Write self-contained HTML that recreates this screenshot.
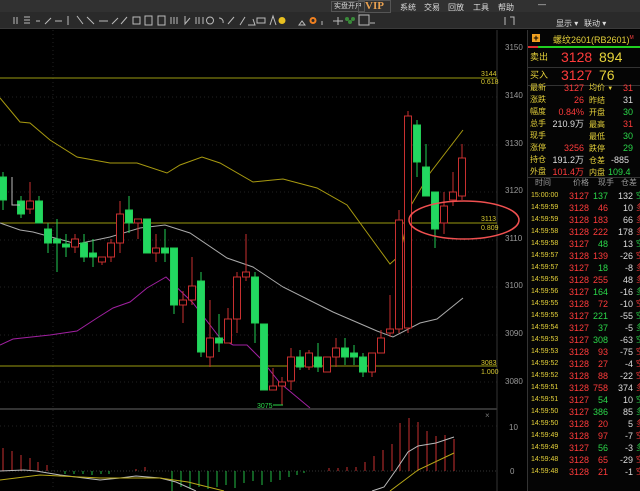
<!DOCTYPE html>
<html><head><meta charset="utf-8"><style>
*{margin:0;padding:0;box-sizing:border-box}
body{width:640px;height:491px;background:#000;overflow:hidden;position:relative;font-family:"Liberation Sans","Noto Sans CJK SC",sans-serif;color:#ccc}
.t1{position:absolute;left:0;top:0;width:640px;height:12px;background:#313131}
.t2{position:absolute;left:0;top:12px;width:640px;height:17px;background:#2a2a2a;border-bottom:1px solid #3a3a3a}
.tx{position:absolute;font-size:8px;color:#ddd;white-space:nowrap}
.rp{position:absolute;left:527px;top:30px;width:113px;height:461px;background:#050505;border-left:1px solid #333;overflow:hidden}
.a{position:absolute;white-space:nowrap;font-size:9px;line-height:10px}
.L{line-height:12px!important}
.y{color:#e6d23a}.r{color:#ff3b3b}.g{color:#2bd74a}.w{color:#ddd}
</style></head><body>
<div class="t1"></div><div class="t2"></div>
<div class="tx" style="left:331px;top:1px;border:1px solid #555;padding:0 2px;font-size:7px;line-height:9px">实盘开户</div>
<div class="tx" style="left:358px;top:0;border:1px solid #555;padding:0 6px;font:bold 11px 'Liberation Serif',serif;color:#e8a050;line-height:11px">VIP</div>
<div class="tx" style="left:400px;top:2px">系统</div>
<div class="tx" style="left:424px;top:2px">交易</div>
<div class="tx" style="left:448px;top:2px">回放</div>
<div class="tx" style="left:473px;top:2px">工具</div>
<div class="tx" style="left:498px;top:2px">帮助</div>
<div class="tx" style="left:538px;top:0">—</div>
<div class="tx" style="left:556px;top:18px">显示 ▾</div>
<div class="tx" style="left:584px;top:18px">联动 ▾</div>
<svg style="position:absolute;left:0;top:12px" width="520" height="17" stroke="#bbb" fill="none" stroke-width="1">
<path d="M14 5v7M17 5v7M24 5h6M24 8h6M24 11h6M36 9h4M45 12l6-6M55 9h7M68 4v9M77 4l6 8M87 5l7 7M99 9h9M112 12l6-6M121 12l6-7M133 5h7v7h-7zM145 4h7v9h-7zM158 4h7v9h-7zM171 5v7M174 5v7M177 5v7M185 4v8l5-6M196 5v7M199 5v7M203 5v7"/>
<circle cx="210" cy="8.5" r="3.5"/>
<path d="M219 6a4 4 0 0 1 4 5M228 12l6-7M240 13l5-8M248 13h7l-2-6M257 6h8v5h-8zM270 13l3-9 3 9M302 9l-3 4h6zM322 9v4M338 5v8M333 9h10"/>
<circle cx="282" cy="8.5" r="3.5" fill="#e8c020" stroke="none"/><circle cx="313" cy="8.5" r="2.5" stroke="#f08020" stroke-width="2"/>
<circle cx="350" cy="10" r="2" fill="#3a8a3a" stroke="none"/><circle cx="347" cy="7" r="2" fill="#3a8a3a" stroke="none"/><circle cx="353" cy="7" r="2" fill="#3a8a3a" stroke="none"/>
<rect x="359" y="3" width="10" height="10"/><path d="M370 11h5"/>
<path d="M505 5v8M510 5h4v8"/></svg>

<svg style="position:absolute;left:0;top:0" width="527" height="491" font-family="Liberation Sans" font-size="8">
<g stroke="#222" stroke-dasharray="1 3"><path d="M0 97h497M0 145h497M0 192h497M0 240h497M0 287h497M0 335h497M0 382h497M53 30v460M0 426h497"/></g>
<line x1="497" y1="30" x2="497" y2="491" stroke="#333"/>
<line x1="0" y1="409" x2="497" y2="409" stroke="#333" stroke-width="2"/>
<g fill="#999"><text x="505" y="50">3150</text><text x="505" y="98">3140</text><text x="505" y="146">3130</text><text x="505" y="193">3120</text><text x="505" y="241">3110</text><text x="505" y="288">3100</text><text x="505" y="336">3090</text><text x="505" y="384">3080</text><text x="509" y="430">10</text><text x="510" y="474">0</text></g>
<g stroke="#9a9a10"><path d="M0 78h497M0 223h497M0 366h497"/></g>
<g fill="#d6c830" font-size="7"><text x="481" y="76">3144</text><text x="481" y="84">0.618</text><text x="481" y="221">3113</text><text x="481" y="230">0.809</text><text x="481" y="365">3083</text><text x="481" y="374">1.000</text></g>
<path d="M0 98L20 122 30 123 50 140 77 157 110 163 137 163 167 173 180 165 202 157 220 163 253 182 283 179 317 188 347 205 363 227 390 264 400 255 410 207 430 173 463 130" stroke="#a89a10" fill="none"/>
<path d="M0 223L20 230 33 232 77 244 110 237 140 228 165 225 190 233 227 258 253 267 283 287 333 312 377 331 393 337 420 323 437 319 463 298" stroke="#aaa" fill="none"/>
<path d="M0 345L13 339 50 335 77 331 97 318 113 308 130 302 147 288 166 277 193 303 220 338 233 345 247 345 260 358 280 383 310 408" stroke="#a020a0" fill="none"/>
<g stroke-width="1">
<g stroke="#22cc55" fill="#22d760">
<path d="M3 172v38M21 196v22M39 196v27M48 223v30M57 219v53M66 234v23M84 234v28M93 239v28M129 196v37M147 219v33M165 229v33M174 248v66M201 272v85M219 314v38M255 272v71M264 324v66M300 350v20M318 343v29M345 338v27M354 345v20M363 353v24M417 120v57M426 144v52M435 192v56"/>
<rect x="-0.5" y="177" width="7" height="23"/><rect x="17.5" y="201" width="7" height="13"/><rect x="35.5" y="201" width="7" height="22"/><rect x="44.5" y="229" width="7" height="14"/><rect x="53.5" y="239" width="7" height="4"/><rect x="62.5" y="244" width="7" height="3"/><rect x="80.5" y="243" width="7" height="14"/><rect x="89.5" y="253" width="7" height="4"/><rect x="125.5" y="210" width="7" height="13"/><rect x="143.5" y="219" width="7" height="34"/><rect x="161.5" y="248" width="7" height="5"/><rect x="170.5" y="248" width="7" height="57"/><rect x="197.5" y="281" width="7" height="71"/><rect x="215.5" y="338" width="7" height="5"/><rect x="251.5" y="277" width="7" height="46"/><rect x="260.5" y="324" width="7" height="66"/><rect x="296.5" y="357" width="7" height="10"/><rect x="314.5" y="357" width="7" height="10"/><rect x="341.5" y="348" width="7" height="9"/><rect x="350.5" y="353" width="7" height="4"/><rect x="359.5" y="357" width="7" height="15"/><rect x="413.5" y="125" width="7" height="37"/><rect x="422.5" y="167" width="7" height="29"/><rect x="431.5" y="192" width="7" height="37"/>
</g>
<g stroke="#c83030" fill="none">
<path d="M30 182v32M75 234v19M102 257v8M111 239v23M120 201v52M138 219v20M156 234v28M183 291v32M192 257v48M210 300v67M228 308v35M237 272v61M246 234v47M273 368v22M282 377v28M291 348v42M309 350v20M327 357v15M336 338v29M372 353v24M381 330v23M390 295v42M399 210v123M408 111v222M444 192v42M453 172v34M462 144v56"/>
<g fill="#000"><rect x="26.5" y="201" width="7" height="8"/><rect x="71.5" y="239" width="7" height="8"/><rect x="98.5" y="257" width="7" height="5"/><rect x="107.5" y="243" width="7" height="14"/><rect x="116.5" y="214" width="7" height="29"/><rect x="134.5" y="219" width="7" height="4"/><rect x="152.5" y="248" width="7" height="5"/><rect x="179.5" y="300" width="7" height="5"/><rect x="188.5" y="286" width="7" height="14"/><rect x="206.5" y="338" width="7" height="19"/><rect x="224.5" y="319" width="7" height="24"/><rect x="233.5" y="277" width="7" height="42"/><rect x="242.5" y="272" width="7" height="5"/><rect x="269.5" y="386" width="7" height="4"/><rect x="278.5" y="382" width="7" height="4"/><rect x="287.5" y="357" width="7" height="24"/><rect x="305.5" y="353" width="7" height="14"/><rect x="323.5" y="357" width="7" height="15"/><rect x="332.5" y="348" width="7" height="9"/><rect x="368.5" y="353" width="7" height="19"/><rect x="377.5" y="338" width="7" height="15"/><rect x="386.5" y="329" width="7" height="4"/><rect x="395.5" y="220" width="7" height="109"/><rect x="404.5" y="116" width="7" height="212"/><rect x="440.5" y="206" width="7" height="17"/><rect x="449.5" y="192" width="7" height="8"/><rect x="458.5" y="158" width="7" height="38"/></g>
</g>
<path d="M12 177v28h8" stroke="#bbb" fill="none"/>
</g>
<ellipse cx="464" cy="220" rx="55" ry="19" stroke="#f05050" stroke-width="1.5" fill="none"/>
<text x="257" y="408" fill="#2bd74a" font-size="7">3075</text><path d="M273 405h10" stroke="#2bd74a"/>
<text x="485" y="418" fill="#777" font-size="8">×</text>
<path d="M0 471h497" stroke="#333" stroke-dasharray="1 2"/>
<g stroke="#c83030"><path d="M3 471v-23M12 471v-20M21 471v-16M30 471v-13M38 471v-9M47 471v-6M136 471v-2M145 471v-4M329 471v-3M338 471v-3M347 471v-4M356 471v-4M365 471v-9M374 471v-15M383 471v-21M392 471v-27M400 471v-48M409 471v-53M418 471v-49M427 471v-40M436 471v-35M445 471v-36M454 471v-32"/></g>
<g stroke="#22bb44"><path d="M65 471v3M74 471v3M83 471v3M92 471v4M101 471v3M109 471v3M172 471v20M181 471v16M190 471v18M199 471v16M208 471v18M217 471v16M226 471v14M235 471v17M244 471v12M253 471v10M262 471v14M271 471v11M280 471v9M289 471v6M297 471v4M304 471v2"/></g>
<path d="M0 471L24 470 36 471 60 475 100 480 120 478 136 476 160 478 176 482 196 491" stroke="#bbb" fill="none"/>
<path d="M0 480L40 475 60 476 100 478 160 478 188 482 224 491" stroke="#b8a818" fill="none"/>
<path d="M372 491L384 487 396 470 408 452 418 446 436 443 454 437" stroke="#bbb" fill="none"/>
<path d="M390 491L418 470 454 453" stroke="#b8a818" fill="none"/>
</svg>

<div class="rp">
<div style="position:absolute;left:4px;top:4px;width:8px;height:8px;background:#f0a020;color:#000;font:bold 9px/8px sans-serif;text-align:center">+</div>
<div class="a y" style="left:25px;top:3px;font-size:9px">螺纹2601(RB2601)<sup style="font-size:5px;color:#f44">M</sup></div>
<div style="position:absolute;left:0;top:16px;width:10px;height:2px;background:#e03030"></div>
<div style="position:absolute;left:10px;top:16px;width:103px;height:2px;background:#20d020"></div>
<div class="a y" style="left:2px;top:22px">卖出</div>
<div class="a r" style="left:33px;top:19px;font-size:14px;line-height:16px">3128</div>
<div class="a y" style="left:71px;top:19px;font-size:14px;line-height:16px">894</div>
<div style="position:absolute;left:0;top:37px;width:113px;height:1px;background:#333"></div>
<div class="a y" style="left:2px;top:40px">买入</div>
<div class="a r" style="left:33px;top:37px;font-size:14px;line-height:16px">3127</div>
<div class="a y" style="left:71px;top:37px;font-size:14px;line-height:16px">76</div>
<div style="position:absolute;left:0;top:55px;width:113px;height:1px;background:#333"></div>
<div style="position:absolute;left:0;top:52px;width:113px;height:100px">
<div class="a y L" style="left:2px;top:0;font-size:8px">最新<br>涨跌<br>幅度<br>总手<br>现手<br>涨停<br>持仓<br>外盘</div>
<div class="a L" style="right:57px;top:0;text-align:right"><span class="r">3127</span><br><span class="r">26</span><br><span class="r">0.84%</span><br><span class="w">210.9万</span><br>&nbsp;<br><span class="r">3256</span><br><span class="w">191.2万</span><br><span class="r">101.4万</span></div>
<div class="a y L" style="left:61px;top:0;font-size:8px">均价 <span style="font-size:6px">▼</span><br>昨结<br>开盘<br>最高<br>最低<br>跌停<br>仓差<br>内盘</div>
<div class="a L" style="left:95px;top:0"><span class="r">31</span><br><span class="w">31</span><br><span class="g">30</span><br><span class="r">31</span><br><span class="g">30</span><br><span class="g">29</span><br><span class="w" style="margin-left:-12px">-885</span><br><span class="g" style="margin-left:-15px">109.4</span></div>
</div>
<div style="position:absolute;left:0;top:147px;width:113px;height:1px;background:#333"></div>
<div class="a" style="left:7px;top:148px;color:#999;font-size:8px">时间</div><div class="a" style="left:45px;top:148px;color:#999;font-size:8px">价格</div><div class="a" style="left:70px;top:148px;color:#999;font-size:8px">现手</div><div class="a" style="left:93px;top:148px;color:#999;font-size:8px">仓差</div>
<div class="a y L" style="left:3px;top:160px;font-size:7px">15:00:00<br>14:59:59<br>14:59:59<br>14:59:58<br>14:59:58<br>14:59:57<br>14:59:57<br>14:59:56<br>14:59:56<br>14:59:55<br>14:59:55<br>14:59:54<br>14:59:53<br>14:59:53<br>14:59:52<br>14:59:52<br>14:59:51<br>14:59:51<br>14:59:50<br>14:59:50<br>14:59:49<br>14:59:49<br>14:59:48<br>14:59:48</div>
<div class="a r L" style="right:51px;top:160px;text-align:right">3127<br>3128<br>3128<br>3128<br>3127<br>3128<br>3127<br>3128<br>3127<br>3128<br>3127<br>3127<br>3127<br>3128<br>3128<br>3128<br>3128<br>3127<br>3127<br>3128<br>3128<br>3127<br>3128<br>3128</div>
<div class="a L" style="right:32px;top:160px;text-align:right"><span class="g">137</span><br><span class="r">46</span><br><span class="r">183</span><br><span class="r">222</span><br><span class="g">48</span><br><span class="r">139</span><br><span class="g">18</span><br><span class="r">255</span><br><span class="g">164</span><br><span class="r">72</span><br><span class="g">221</span><br><span class="g">37</span><br><span class="g">308</span><br><span class="r">93</span><br><span class="r">27</span><br><span class="r">88</span><br><span class="r">758</span><br><span class="g">54</span><br><span class="g">386</span><br><span class="r">20</span><br><span class="r">97</span><br><span class="g">56</span><br><span class="r">65</span><br><span class="r">21</span></div>
<div class="a w L" style="right:7px;top:160px;text-align:right">132<br>10<br>66<br>178<br>13<br>-26<br>-8<br>48<br>-16<br>-10<br>-55<br>-5<br>-63<br>-75<br>-4<br>-22<br>374<br>10<br>85<br>5<br>-7<br>-3<br>-29<br>-1</div>
<div class="a L" style="left:108px;top:160px;font-size:8px"><span class="g">空</span><br><span class="r">多</span><br><span class="r">多</span><br><span class="r">多</span><br><span class="g">空</span><br><span class="r">空</span><br><span class="r">多</span><br><span class="r">多</span><br><span class="g">多</span><br><span class="r">空</span><br><span class="g">空</span><br><span class="g">多</span><br><span class="g">空</span><br><span class="r">空</span><br><span class="r">空</span><br><span class="r">空</span><br><span class="r">多</span><br><span class="g">空</span><br><span class="g">多</span><br><span class="r">多</span><br><span class="r">空</span><br><span class="g">多</span><br><span class="r">空</span><br><span class="r">空</span></div>
</div>
</body></html>
